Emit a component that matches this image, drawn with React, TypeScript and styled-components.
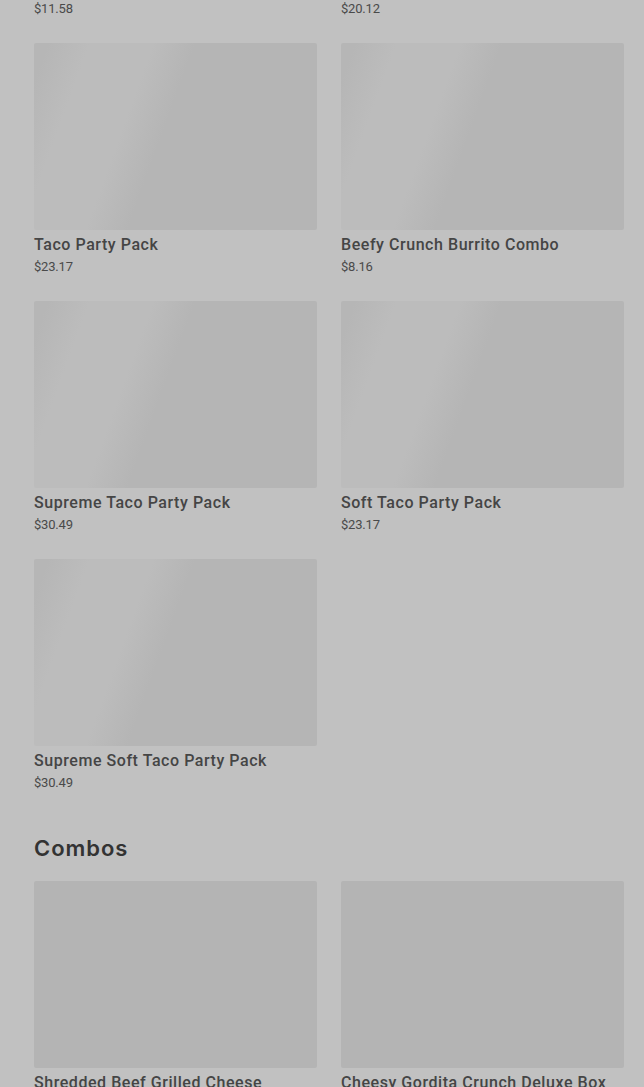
import React from "react";
import styled, { createGlobalStyle } from "styled-components";

const Global = createGlobalStyle`
  html, body { margin: 0; padding: 0; background: #c1c1c1; overflow: hidden; }
  * { box-sizing: border-box; }
`;

const Page = styled.div`
  width: 644px;
  padding: 0 20px 0 34px;
  margin-top: -215px;
  font-family: Roboto, "Liberation Sans", sans-serif;
`;

const Section = styled.section<{ $gap?: number }>`
  display: flex;
  flex-direction: column;
  margin-bottom: ${(p) => p.$gap ?? 0}px;
`;

const Heading = styled.h2`
  margin: 0 0 19px;
  font-family: Inter, "Liberation Sans", sans-serif;
  font-weight: 600;
  font-size: 22px;
  line-height: 28px;
  color: #333333;
  letter-spacing: 0.95px;
`;

const Grid = styled.div`
  display: grid;
  grid-template-columns: 1fr 1fr;
  column-gap: 24px;
  row-gap: 25px;
`;

const Card = styled.div`
  display: flex;
  flex-direction: column;
  min-width: 0;
`;

const Thumb = styled.div<{ $shimmer?: boolean }>`
  height: 187px;
  border-radius: 2px;
  background: ${(p) =>
    p.$shimmer
      ? "linear-gradient(110deg, #b6b6b6 4%, #bcbcbc 16%, #bcbcbc 34%, #b5b5b5 46%)"
      : "#b4b4b4"};
`;

const Title = styled.div`
  margin-top: 5px;
  font-size: 16px;
  line-height: 20px;
  font-weight: 500;
  color: #454545;
  letter-spacing: 0.55px;
`;

const Price = styled.div`
  margin-top: 3px;
  font-size: 13px;
  line-height: 18px;
  color: #4a4a4a;
  letter-spacing: -0.2px;
`;

type Item = { name: string; price: string };

const party: Item[] = [
  { name: "Chalupa Cravings Box", price: "$11.58" },
  { name: "Nachos Party Pack", price: "$20.12" },
  { name: "Taco Party Pack", price: "$23.17" },
  { name: "Beefy Crunch Burrito Combo", price: "$8.16" },
  { name: "Supreme Taco Party Pack", price: "$30.49" },
  { name: "Soft Taco Party Pack", price: "$23.17" },
  { name: "Supreme Soft Taco Party Pack", price: "$30.49" },
];

const combos: Item[] = [
  { name: "Shredded Beef Grilled Cheese Burrito Combo", price: "$9.49" },
  { name: "Cheesy Gordita Crunch Deluxe Box", price: "$10.29" },
];

const Product = ({ item, shimmer }: { item: Item; shimmer?: boolean }) => (
  <Card>
    <Thumb $shimmer={shimmer} />
    <Title>{item.name}</Title>
    <Price>{item.price}</Price>
  </Card>
);

export default function App() {
  return (
    <>
      <Global />
      <Page>
        <Section $gap={42}>
          <Grid>
            {party.map((it) => (
              <Product key={it.name} item={it} shimmer />
            ))}
          </Grid>
        </Section>
        <Section>
          <Heading>Combos</Heading>
          <Grid>
            {combos.map((it) => (
              <Product key={it.name} item={it} />
            ))}
          </Grid>
        </Section>
      </Page>
    </>
  );
}
